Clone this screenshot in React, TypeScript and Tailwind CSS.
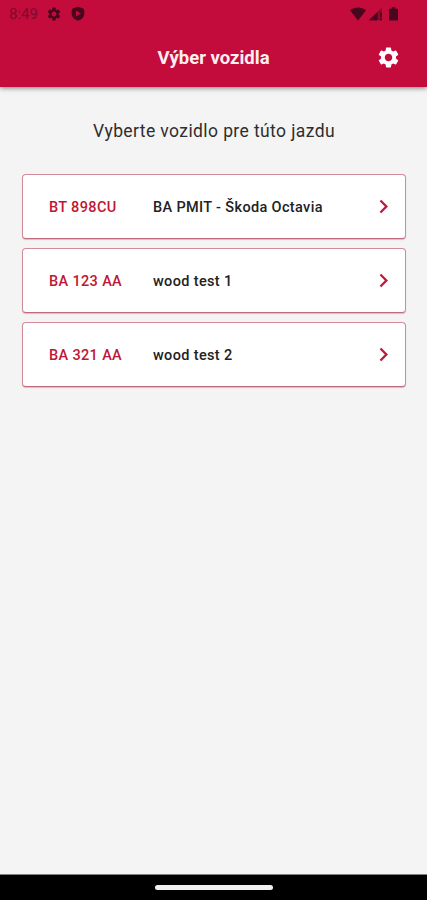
import React from 'react';
import { MdChevronRight, MdSettings } from 'react-icons/md';

interface Vehicle {
  plate: string;
  name: string;
}

const vehicles: Vehicle[] = [
  { plate: 'BT 898CU', name: 'BA PMIT - Škoda Octavia' },
  { plate: 'BA 123 AA', name: 'wood test 1' },
  { plate: 'BA 321 AA', name: 'wood test 2' },
];

const StatusBar: React.FC = () => (
  <div className="flex h-7 items-center pl-[9px] pr-[29px] text-[#4a061c]">
    <span className="w-[37px] text-[15px] leading-7 text-[#7d0a2c]">8:49</span>
    <MdSettings className="size-4" />
    <svg className="ml-2 size-4" viewBox="0 0 16 16" fill="currentColor">
      <path
        fillRule="evenodd"
        d="M8 .8 2.600 2.500C1.600 4 1.500 5.500 1.700 8c.3 3.200 2.800 5.800 6.300 6.800 3.500-1 6-3.600 6.300-6.800.2-2.500.1-4-.9-5.500L8 .8ZM6 4.600l5 3-5 3z"
      />
    </svg>
    <svg className="ml-auto h-[14px] w-4" viewBox="0 0 16 14" fill="currentColor">
      <path d="M0 3.200C2.300 1.500 5 .600 8 .600s5.700.900 8 2.600L8 13.400z" />
    </svg>
    <svg className="ml-[3px] h-[14px] w-[13px]" viewBox="0 0 13 14" fill="currentColor">
      <path d="M13 .500V13.300H0z" fillOpacity=".45" />
      <path d="M8.500 5v8.300H0zM11.200 5.500H13V10h-1.800zM11.200 11.500H13v1.800h-1.800z" />
    </svg>
    <svg className="ml-[7px] h-[14px] w-[9px]" viewBox="0 0 9 14" fill="currentColor">
      <path d="M2.700.300h3.600v1.400H8.500a.5.5 0 0 1 .5.500v10.800a.5.5 0 0 1-.5.500h-8a.5.5 0 0 1-.5-.5V2.200a.5.5 0 0 1 .5-.5h2.200z" />
    </svg>
  </div>
);

const VehicleCard: React.FC<{ vehicle: Vehicle }> = ({ vehicle }) => (
  <button className="flex h-[65px] w-full items-center rounded-[4px] border border-[#d18b97] border-b-[#bf6b79] bg-white pl-[26px] pr-[8px] text-left text-[14.5px] font-medium tracking-[0.35px] shadow-[0_1px_1px_rgba(160,50,70,0.3)]">
    <span className="w-[104px] pt-[2px] text-[#c11632]">{vehicle.plate}</span>
    <span className="flex-1 pt-[2px] text-[#222222]">{vehicle.name}</span>
    <MdChevronRight className="size-[27px] text-[#c3173b]" />
  </button>
);

const App: React.FC = () => {
  return (
    <div className="flex h-[900px] w-[427px] flex-col overflow-hidden bg-[#f4f4f4] font-[Roboto,sans-serif]">
      <header className="h-[87px] bg-[#c30b3c] shadow-[0_1px_5px_rgba(0,0,0,0.5)]">
        <StatusBar />
        <div className="grid h-[58px] grid-cols-[1fr_auto_1fr] items-center px-[26px]">
          <h1 className="col-start-2 pt-px text-[18.5px] leading-7 font-bold text-[#fdeef0]">
            Výber vozidla
          </h1>
          <button className="justify-self-end">
            <MdSettings className="size-[25px] text-white" />
          </button>
        </div>
      </header>

      <main className="flex-1 pl-[22px] pr-[21px] pt-[32px]">
        <p className="text-center text-[17.5px] leading-6 tracking-[0.4px] text-[#2e2e2e]">
          Vyberte vozidlo pre túto jazdu
        </p>
        <div className="mt-[31px] flex flex-col gap-[9px]">
          {vehicles.map((vehicle) => (
            <VehicleCard key={vehicle.plate} vehicle={vehicle} />
          ))}
        </div>
      </main>

      <footer className="flex h-[26px] items-center justify-center border-t border-[#808080] bg-black">
        <div className="h-[5px] w-[118px] rounded-full bg-[#f0f0f0]" />
      </footer>
    </div>
  );
};

export default App;
